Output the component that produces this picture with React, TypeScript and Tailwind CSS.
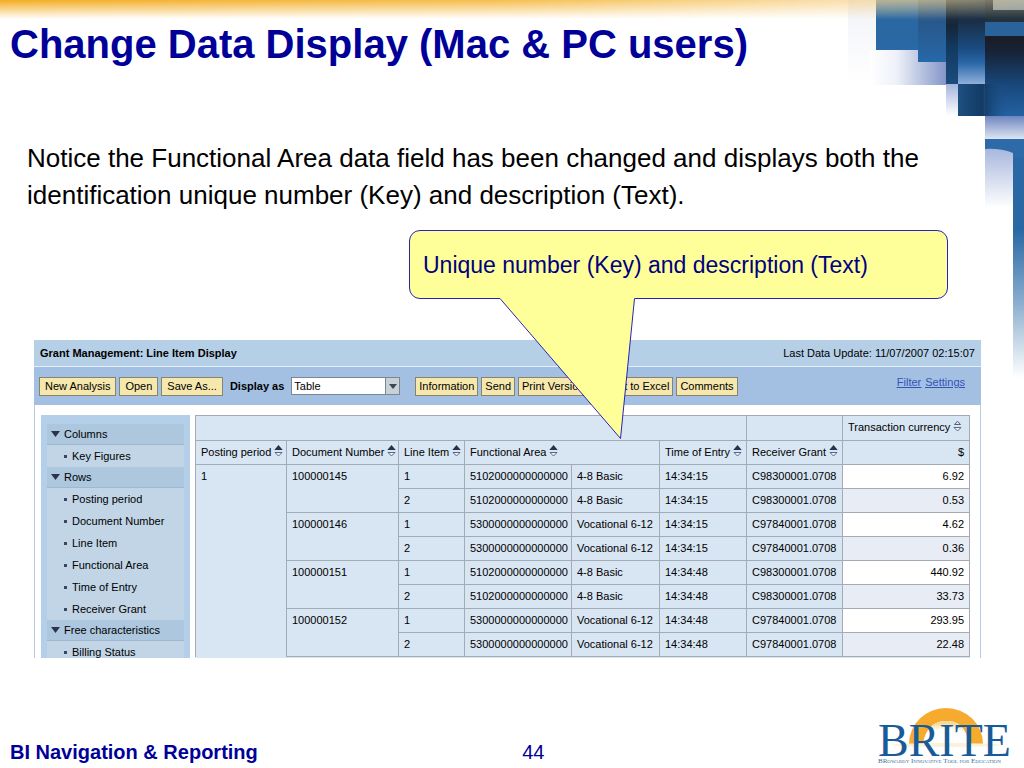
import { useState } from "react";

type Amount = { item: string; amount: string };
type Doc = {
  doc: string;
  area: string;
  name: string;
  time: string;
  grant: string;
  lines: Amount[];
};

const docs: Doc[] = [
  {
    doc: "100000145",
    area: "5102000000000000",
    name: "4-8 Basic",
    time: "14:34:15",
    grant: "C98300001.0708",
    lines: [
      { item: "1", amount: "6.92" },
      { item: "2", amount: "0.53" },
    ],
  },
  {
    doc: "100000146",
    area: "5300000000000000",
    name: "Vocational 6-12",
    time: "14:34:15",
    grant: "C97840001.0708",
    lines: [
      { item: "1", amount: "4.62" },
      { item: "2", amount: "0.36" },
    ],
  },
  {
    doc: "100000151",
    area: "5102000000000000",
    name: "4-8 Basic",
    time: "14:34:48",
    grant: "C98300001.0708",
    lines: [
      { item: "1", amount: "440.92" },
      { item: "2", amount: "33.73" },
    ],
  },
  {
    doc: "100000152",
    area: "5300000000000000",
    name: "Vocational 6-12",
    time: "14:34:48",
    grant: "C97840001.0708",
    lines: [
      { item: "1", amount: "293.95" },
      { item: "2", amount: "22.48" },
    ],
  },
];

const groups = [
  { title: "Columns", items: ["Key Figures"] },
  {
    title: "Rows",
    items: [
      "Posting period",
      "Document Number",
      "Line Item",
      "Functional Area",
      "Time of Entry",
      "Receiver Grant",
    ],
  },
  { title: "Free characteristics", items: ["Billing Status"] },
];

const cell = "border border-[#a3acb4] px-[5px] align-top";

function SortIcon({ open = false }: { open?: boolean }) {
  return (
    <svg width="9" height="12" viewBox="0 0 9 12" className="ml-[3px] inline-block align-[-1px]">
      <path
        d={open ? "M1.5 4.5 4.5 1.2 7.5 4.5Z" : "M.3 5 4.5 0 8.700 5Z"}
        fill={open ? "none" : "#27304f"}
        stroke={open ? "#56627c" : "none"}
      />
      <path d="M1 7.500H8L4.500 11Z" fill="#eef3f9" stroke="#5d6880" />
    </svg>
  );
}

function Corner() {
  return (
    <svg
      width="184"
      height="380"
      viewBox="840 0 184 380"
      className="absolute top-0 right-0"
      aria-hidden="true"
    >
      <defs>
        <linearGradient id="haze" x1="0" x2="1" y1="0" y2="0">
          <stop offset="0" stopColor="#fff" />
          <stop offset=".35" stopColor="#eef1f9" />
          <stop offset="1" stopColor="#8496c8" />
        </linearGradient>
        <linearGradient id="faint" x1="0" x2="0" y1="0" y2="1">
          <stop offset="0" stopColor="#f1f3f8" />
          <stop offset="1" stopColor="#fff" />
        </linearGradient>
        <linearGradient id="blue" x1="0" x2="0" y1="0" y2="1">
          <stop offset="0" stopColor="#6a93b4" />
          <stop offset=".4" stopColor="#2a68a2" />
          <stop offset="1" stopColor="#2a68a6" />
        </linearGradient>
        <linearGradient id="mid" x1="0" x2="0" y1="0" y2="1">
          <stop offset="0" stopColor="#5d7f98" />
          <stop offset=".35" stopColor="#28588b" />
          <stop offset="1" stopColor="#2668a8" />
        </linearGradient>
        <linearGradient id="navy" x1="0" x2="0" y1="0" y2="1">
          <stop offset="0" stopColor="#2f4455" />
          <stop offset=".3" stopColor="#152638" />
          <stop offset=".58" stopColor="#133a62" />
          <stop offset="1" stopColor="#1a4c7c" />
        </linearGradient>
        <linearGradient id="glow" x1="0" x2="0" y1="0" y2="1">
          <stop offset="0" stopColor="#2f4455" />
          <stop offset=".25" stopColor="#1a2e46" />
          <stop offset=".58" stopColor="#1a4c82" />
          <stop offset=".75" stopColor="#2a66a6" />
          <stop offset="1" stopColor="#8fb0dc" />
        </linearGradient>
        <linearGradient id="night" x1="0" x2="0" y1="0" y2="1">
          <stop offset="0" stopColor="#1b1c26" />
          <stop offset=".2" stopColor="#172338" />
          <stop offset=".6" stopColor="#18477a" />
          <stop offset="1" stopColor="#2362a2" />
        </linearGradient>
        <linearGradient id="block" x1="0" x2="1" y1="0" y2="0">
          <stop offset="0" stopColor="#1d5081" />
          <stop offset=".5" stopColor="#123a64" />
          <stop offset="1" stopColor="#1d5490" stopOpacity="0" />
        </linearGradient>
        <linearGradient id="lilac" x1="0" x2="0" y1="0" y2="1">
          <stop offset="0" stopColor="#6e86c0" />
          <stop offset="1" stopColor="#e3e9f4" />
        </linearGradient>
        <linearGradient id="fade" x1="0" x2="0" y1="0" y2="1">
          <stop offset="0" stopColor="#a4b4dc" />
          <stop offset="1" stopColor="#fff" />
        </linearGradient>
        <linearGradient id="strip" x1="0" x2="0" y1="0" y2="1">
          <stop offset="0" stopColor="#2a68a4" />
          <stop offset=".35" stopColor="#2a68a4" />
          <stop offset=".65" stopColor="#84a9cb" />
          <stop offset="1" stopColor="#fff" />
        </linearGradient>
      </defs>
      <rect x="848" y="0" width="28" height="85" fill="url(#faint)" />
      <rect x="870" y="50" width="76" height="35" fill="url(#haze)" />
      <rect x="876" y="0" width="42" height="50" fill="url(#blue)" />
      <rect x="918" y="0" width="28" height="62" fill="url(#mid)" />
      <rect x="946" y="0" width="12" height="84" fill="url(#navy)" />
      <rect x="946" y="84" width="12" height="32" fill="url(#fade)" />
      <rect x="958" y="0" width="27" height="84" fill="url(#glow)" />
      <rect x="985" y="0" width="39" height="22" fill="#22333f" />
      <rect x="993" y="0" width="31" height="10" fill="#8b9ba6" />
      <rect x="985" y="22" width="39" height="14" fill="#2a6399" />
      <rect x="985" y="36" width="39" height="80" fill="url(#night)" />
      <rect x="958" y="84" width="50" height="32" fill="url(#block)" />
      <rect x="985" y="116" width="39" height="24" fill="url(#lilac)" />
      <rect x="985" y="146" width="28" height="62" fill="url(#fade)" />
      <rect x="1013" y="150" width="11" height="228" fill="url(#strip)" />
      <path d="M985 139H1024V158H1013V153Q1000 148 985 149Z" fill="#2d6aa8" />
    </svg>
  );
}

function Logo() {
  return (
    <svg width="138" height="60" viewBox="0 0 138 60" role="img" aria-label="BRITE">
      <defs>
        <radialGradient id="sun" cx=".5" cy="1" r=".9">
          <stop offset="0" stopColor="#fff" />
          <stop offset=".7" stopColor="#fff" />
          <stop offset="1" stopColor="#fbd894" />
        </radialGradient>
      </defs>
      <path d="M31 38A37 36 0 0 1 105 38H90Q87 14 68 15Q49 15 45 38Z" fill="#f6ab2f" />
      <path d="M45 38Q49 15 68 15Q87 14 91 38Z" fill="url(#sun)" />
      <ellipse cx="68" cy="39" rx="54" ry="2" fill="#fdf0dc" />
      <text x="0" y="50" fontSize="46" fill="#175c98" className="font-['Liberation_Serif',serif]">
        BRITE
      </text>
      <text
        x="0"
        y="57"
        fontSize="7"
        fill="#3a6f9f"
        className="font-['Liberation_Serif',serif] [font-variant:small-caps]"
      >
        BRowardy Innovative Tool for Education
      </text>
    </svg>
  );
}

function ToolButton({ label, wide = false }: { label: string; wide?: boolean }) {
  return (
    <button
      type="button"
      className={`h-[19px] shrink-0 border border-[#858470] bg-[#f6e8ac] leading-4 whitespace-nowrap ${
        wide ? "px-[5px]" : "px-[3px]"
      }`}
    >
      {label}
    </button>
  );
}

function Toolbar() {
  const [view, setView] = useState("Table");

  return (
    <div className="flex h-[38px] items-center gap-[3px] bg-[#a3c0e3] pr-4 pl-[5px]">
      <ToolButton wide label="New Analysis" />
      <ToolButton wide label="Open" />
      <ToolButton wide label="Save As..." />
      <label htmlFor="view" className="mx-1 font-bold whitespace-nowrap">
        Display as
      </label>
      <div className="relative mr-3">
        <select
          id="view"
          value={view}
          onChange={(e) => setView(e.target.value)}
          className="block h-[18px] w-[109px] appearance-none border border-[#7b8794] bg-white px-[2px]"
        >
          <option>Table</option>
          <option>Graphic</option>
        </select>
        <span className="pointer-events-none absolute inset-y-px right-px flex w-[14px] items-center justify-center border-l border-[#7b8794] bg-[#c9d0d6]">
          <svg width="8" height="5" viewBox="0 0 8 5">
            <path d="M0 0H8L4 5Z" fill="#3c4657" />
          </svg>
        </span>
      </div>
      <ToolButton label="Information" />
      <ToolButton label="Send" />
      <ToolButton label="Print Version" />
      <ToolButton label="Export to Excel" />
      <ToolButton label="Comments" />
      <div className="mb-2 ml-auto flex gap-1 text-[#3553b5] underline">
        <a href="#filter">Filter</a>
        <a href="#settings">Settings</a>
      </div>
    </div>
  );
}

function Sidebar() {
  return (
    <nav className="w-[149px] shrink-0 bg-[#b3cfe9] px-[6px] pt-[9px]">
      {groups.map((group) => (
        <div key={group.title} className="bg-[#c1d5e6]">
          <h3 className="flex h-[21px] items-center gap-1 border-b border-[#9fb8cf] bg-[#adc7df] pl-1">
            <svg width="9" height="6" viewBox="0 0 9 6">
              <path d="M0 0H9L4.500 6Z" fill="#2b3350" />
            </svg>
            {group.title}
          </h3>
          <ul>
            {group.items.map((item) => (
              <li key={item} className="flex h-[22px] items-center gap-[5px] pl-[17px]">
                <span className="size-[3px] bg-[#3b4560]" />
                {item}
              </li>
            ))}
          </ul>
        </div>
      ))}
    </nav>
  );
}

function ItemTable() {
  return (
    <table className="w-full table-fixed border-collapse bg-[#d8e5f3] text-left leading-[22px] whitespace-nowrap">
      <colgroup>
        <col className="w-[91px]" />
        <col className="w-[112px]" />
        <col className="w-[66px]" />
        <col className="w-[107px]" />
        <col className="w-[88px]" />
        <col className="w-[87px]" />
        <col className="w-[96px]" />
        <col className="w-[127px]" />
      </colgroup>
      <thead className="[&_th]:font-normal">
        <tr className="h-[25px]">
          <td colSpan={6} className={cell} />
          <td className={cell} />
          <th className={cell}>
            Transaction currency
            <SortIcon open />
          </th>
        </tr>
        <tr className="h-6">
          <th className={cell}>
            Posting period
            <SortIcon />
          </th>
          <th className={cell}>
            Document Number
            <SortIcon />
          </th>
          <th className={cell}>
            Line Item
            <SortIcon />
          </th>
          <th colSpan={2} className={cell}>
            Functional Area
            <SortIcon />
          </th>
          <th className={cell}>
            Time of Entry
            <SortIcon />
          </th>
          <th className={cell}>
            Receiver Grant
            <SortIcon />
          </th>
          <th className={`${cell} text-right`}>$</th>
        </tr>
      </thead>
      <tbody>
        {docs.map((d, di) =>
          d.lines.map((line, i) => (
            <tr key={d.doc + line.item} className="h-6">
              {di === 0 && i === 0 && (
                <td rowSpan={8} className={`${cell} border-b-0`}>
                  1
                </td>
              )}
              {i === 0 && (
                <td rowSpan={2} className={cell}>
                  {d.doc}
                </td>
              )}
              <td className={cell}>{line.item}</td>
              <td className={cell}>{d.area}</td>
              <td className={cell}>{d.name}</td>
              <td className={cell}>{d.time}</td>
              <td className={cell}>{d.grant}</td>
              <td className={`${cell} text-right ${i === 0 ? "bg-white" : "bg-[#e8edf5]"}`}>
                {line.amount}
              </td>
            </tr>
          ))
        )}
      </tbody>
    </table>
  );
}

export default function App() {
  return (
    <div className="relative flex min-h-screen flex-col overflow-hidden bg-white font-['Liberation_Sans',Arial,sans-serif] text-black">
      <Corner />
      <div className="absolute inset-x-0 top-0 h-[19px] bg-linear-to-r from-[#f3ad20] via-[#f6bf50] to-[#f3d9a0]/40 [mask-image:linear-gradient(to_bottom,black,transparent)]" />

      <header className="relative px-[10px] pt-5">
        <h1 className="text-[40px] leading-[48px] font-bold text-[#000099]">
          Change Data Display (Mac &amp; PC users)
        </h1>
      </header>

      <main className="relative">
        <p className="mr-20 ml-[27px] pt-[72px] text-[26px] leading-[37px]">
          Notice the Functional Area data field has been changed and displays both the
          identification unique number (Key) and description (Text).
        </p>

        <div className="relative z-10 mt-4 mr-[76px] ml-auto flex h-[69px] w-[539px] items-center rounded-[11px] border border-[#2a22b8] bg-[#ffff99] px-[13px] pt-[2px] text-[23px] text-[#000080]">
          Unique number (Key) and description (Text)
          <svg
            width="140"
            height="144"
            viewBox="0 0 140 144"
            className="absolute top-[66px] left-[88px]"
            aria-hidden="true"
          >
            <path d="M2 0V1.500L122.500 141.500L136.500 1.500V0Z" fill="#ffff99" />
            <path d="M2 1.500L122.500 141.500L136.500 1.500" fill="none" stroke="#2a22b8" />
          </svg>
        </div>

        <section className="mt-[41px] mr-[43px] ml-[34px] text-[11px] leading-4">
          <div className="flex h-[26px] items-center justify-between bg-[#b5cfe7] px-[6px]">
            <h2 className="font-bold">Grant Management: Line Item Display</h2>
            <span>Last Data Update: 11/07/2007 02:15:07</span>
          </div>
          <div className="border-t border-[#e4eef8]">
            <Toolbar />
          </div>
          <div className="flex h-[253px] gap-[5px] overflow-hidden border-x border-[#b9cbe0] pt-[10px] pr-[10px] pl-[6px]">
            <Sidebar />
            <div className="min-w-0 flex-1 bg-[#d8e5f3]">
              <ItemTable />
            </div>
          </div>
        </section>
      </main>

      <footer className="relative mt-auto grid grid-cols-[51%_1fr_auto] items-end pr-2 pb-[2px] text-xl leading-7 text-[#000099]">
        <span className="pl-[10px] font-bold">BI Navigation &amp; Reporting</span>
        <span className="pl-1">44</span>
        <Logo />
      </footer>
    </div>
  );
}
